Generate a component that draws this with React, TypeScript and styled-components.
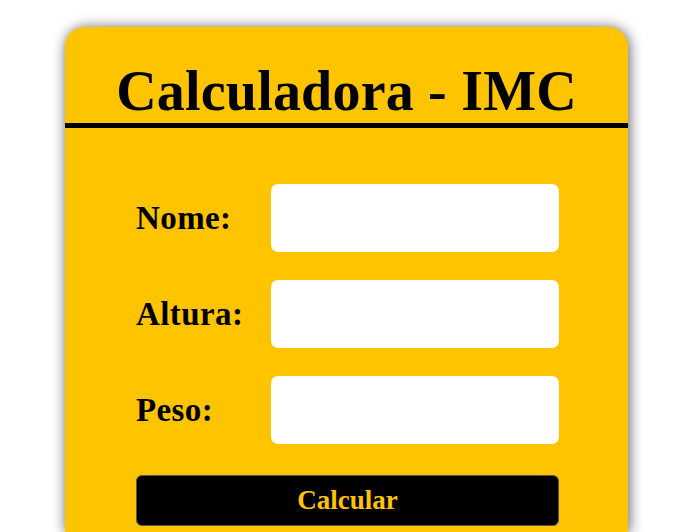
import React from 'react'
import styled, { createGlobalStyle } from 'styled-components'

const GlobalStyle = createGlobalStyle`
  body {
    margin: 0;
    background: #ffffff;
    font-family: "Liberation Serif", "Times New Roman", serif;
  }
`

const fields = ['Nome:', 'Altura:', 'Peso:']

const App = () => {
  return (
    <>
      <GlobalStyle />
      <Card>
        <Header>
          <Title>Calculadora - IMC</Title>
        </Header>
        <Form onSubmit={(e) => e.preventDefault()}>
          {fields.map((f) => (
            <Row key={f}>
              <Label>{f}</Label>
              <Input type="text" />
            </Row>
          ))}
          <Button type="submit">Calcular</Button>
        </Form>
      </Card>
    </>
  )
}

const Card = styled.div`
  width: 563px;
  min-height: 505px;
  margin: 27px 0 0 65px;
  background: #ffc400;
  border-radius: 20px 20px 0 0;
  box-shadow: 1px 1px 14px rgba(0, 0, 0, 0.65);
`
const Header = styled.div`
  padding-top: 32px;
  border-bottom: 5px solid #000;
  text-align: center;
`
const Title = styled.h1`
  margin: 0;
  font-size: 56px;
  line-height: 64px;
  font-weight: bold;
  letter-spacing: 0.2px;
  color: #000;
`
const Form = styled.form`
  width: 423px;
  margin: 0 0 0 71px;
  padding-top: 56px;
  display: flex;
  flex-direction: column;
  gap: 28px;
`
const Row = styled.div`
  display: flex;
  align-items: center;
  height: 68px;
`
const Label = styled.label`
  width: 135px;
  font-size: 33px;
  line-height: 33px;
  font-weight: bold;
  letter-spacing: 0.4px;
  color: #000;
`
const Input = styled.input`
  width: 288px;
  height: 68px;
  box-sizing: border-box;
  border: none;
  border-radius: 7px;
  background: #fff;
  outline: none;
`
const Button = styled.button`
  margin-top: 3px;
  height: 51px;
  border: 1px solid #555;
  border-radius: 6px;
  background: #000;
  color: #ffc400;
  font-family: "Liberation Serif", "Times New Roman", serif;
  font-size: 27px;
  font-weight: bold;
  cursor: pointer;
`

export default App
